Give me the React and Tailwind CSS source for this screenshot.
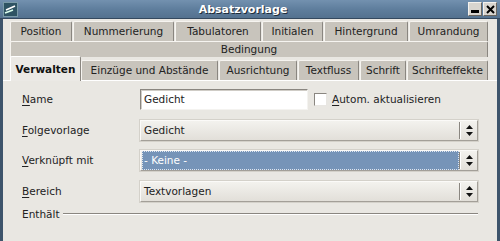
const tabBase =
  "flex items-center justify-center bg-[#c8c4bc] border-t border-l border-r border-t-[#f6f4f0] border-l-[#f6f4f0] border-r-[#8a8680] rounded-t-[2px] text-[#222]"

function Tab({ label, w }) {
  return (
    <div className={`${tabBase} h-[20px] mr-px`} style={{ width: w }}>
      {label}
    </div>
  )
}

function Arrows() {
  return (
    <div className="flex h-full items-center">
      <div className="h-[17px] w-px bg-[#8a8680]" />
      <div className="h-[17px] w-px bg-white" />
      <div className="flex w-[16px] flex-col items-center gap-[3px]">
        <svg width="7" height="4" viewBox="0 0 7 4">
          <path d="M3.5 0 L7 4 L0 4 Z" fill="#111" />
        </svg>
        <svg width="7" height="4" viewBox="0 0 7 4">
          <path d="M0 0 L7 0 L3.5 4 Z" fill="#111" />
        </svg>
      </div>
    </div>
  )
}

function Select({ value, active }) {
  return (
    <div className="flex h-[21px] w-[338px] items-center border border-t-[#fbfaf8] border-l-[#fbfaf8] border-b-[#a39f98] border-r-[#a39f98] bg-gradient-to-b from-[#f3f2ee] to-[#e2dfd9] shadow-[0_0_0_1px_#d4d1ca]">
      {active ? (
        <div className="ml-px flex h-[19px] flex-1 items-center border border-dotted border-[#dfe6f0] bg-[#7694b8] pl-[1px] text-white">
          {value}
        </div>
      ) : (
        <div className="flex-1 pl-[3px] text-[#222]">{value}</div>
      )}
      <Arrows />
    </div>
  )
}

function Label({ first, rest }) {
  return (
    <div className="w-[118px] text-[#222]">
      <span className="underline underline-offset-2">{first}</span>
      {rest}
    </div>
  )
}

export default function App() {
  return (
    <div className="flex h-[241px] w-[500px] flex-col overflow-hidden bg-[#e9e7e2] font-['DejaVu_Sans',sans-serif] text-[10.5px] leading-none">
      {/* title bar */}
      <div className="relative flex h-[19px] items-center border-b border-[#34495f] bg-gradient-to-b from-[#7391af] via-[#5f7e9d] to-[#54728f] px-[3px]">
        <svg width="15" height="15" viewBox="0 0 15 15" className="shrink-0">
          <rect x="0" y="0" width="15" height="15" fill="#2e5363" />
          <rect x="0.5" y="0.5" width="14" height="14" fill="none" stroke="#7a9aa8" />
          <path d="M3 8 L12 4" stroke="#fff" strokeWidth="1.6" />
          <path d="M2 11 L10 8" stroke="#dfe" strokeWidth="1.4" />
        </svg>
        <div className="flex-1 text-center text-[11px] font-bold text-white [text-shadow:1px_1px_0_#1e2c3a]">
          Absatzvorlage
        </div>
        <div className="flex gap-px">
          <div className="flex h-[14px] w-[14px] items-end justify-center border border-[#f4f2ee] border-b-[#6a6660] border-r-[#6a6660] bg-[#d8d5cf] pb-[2px]">
            <div className="h-[3px] w-[8px] bg-black" />
          </div>
          <div className="flex h-[14px] w-[14px] items-center justify-center border border-[#f4f2ee] border-b-[#6a6660] border-r-[#6a6660] bg-[#d8d5cf]">
            <svg width="9" height="9" viewBox="0 0 9 9">
              <path d="M1 1 L8 8 M8 1 L1 8" stroke="#000" strokeWidth="2" />
            </svg>
          </div>
        </div>
      </div>

      {/* body */}
      <div className="flex flex-1 flex-col border-l-[3px] border-r-[3px] border-[#3e546b] pt-[2px]">
        <div className="pl-[7px] pr-[9px]">
          <div className="flex">
            <Tab label="Position" w={62} />
            <Tab label="Nummerierung" w={101} />
            <Tab label="Tabulatoren" w={86} />
            <Tab label="Initialen" w={61} />
            <Tab label="Hintergrund" w={84} />
            <div className={`${tabBase} h-[20px] flex-1`}>Umrandung</div>
          </div>
          <div className={`${tabBase} h-[16px]`}>Bedingung</div>
          <div className="flex h-[23px] items-end">
            <div className="relative z-10 mb-[-1px] flex h-[25px] w-[71px] items-center justify-center rounded-t-[2px] border-l border-t border-r border-l-white border-t-white border-r-[#8a8680] bg-[#ebe9e5] font-bold text-[#111]">
              Verwalten
            </div>
            <Tab label="Einzüge und Abstände" w={137} />
            <Tab label="Ausrichtung" w={78} />
            <Tab label="Textfluss" w={61} />
            <Tab label="Schrift" w={46} />
            <div className={`${tabBase} h-[20px] flex-1`}>Schrifteffekte</div>
          </div>
        </div>

        <div className="flex flex-1 flex-col border-t border-white pl-[19px] pt-[8px]">
          <div className="flex h-[21px] items-center">
            <Label first="N" rest="ame" />
            <div className="flex h-[21px] w-[168px] items-center border border-t-[#8a8680] border-l-[#8a8680] border-b-[#f4f3f0] border-r-[#f4f3f0] bg-white pl-[3px] text-[#222] shadow-[inset_1px_1px_0_#cfccc6]">
              Gedicht
            </div>
            <div className="ml-[6px] h-[13px] w-[13px] border border-[#8a8680] border-b-[#e8e6e2] border-r-[#e8e6e2] bg-white" />
            <div className="ml-[5px] text-[#222]">
              <span className="underline underline-offset-2">A</span>utom. aktualisieren
            </div>
          </div>
          <div className="mt-[10px] flex h-[21px] items-center">
            <Label first="F" rest="olgevorlage" />
            <Select value="Gedicht" />
          </div>
          <div className="mt-[9px] flex h-[21px] items-center">
            <Label first="V" rest="erknüpft mit" />
            <Select value="- Keine -" active />
          </div>
          <div className="mt-[10px] flex h-[21px] items-center">
            <Label first="B" rest="ereich" />
            <Select value="Textvorlagen" />
          </div>
          <div className="mt-[5px] flex h-[14px] items-center pr-[19px]">
            <div className="text-[#222]">Enthält</div>
            <div className="ml-[3px] flex-1 border-t border-b border-t-[#8a8680] border-b-white" />
          </div>
        </div>
      </div>
    </div>
  )
}
